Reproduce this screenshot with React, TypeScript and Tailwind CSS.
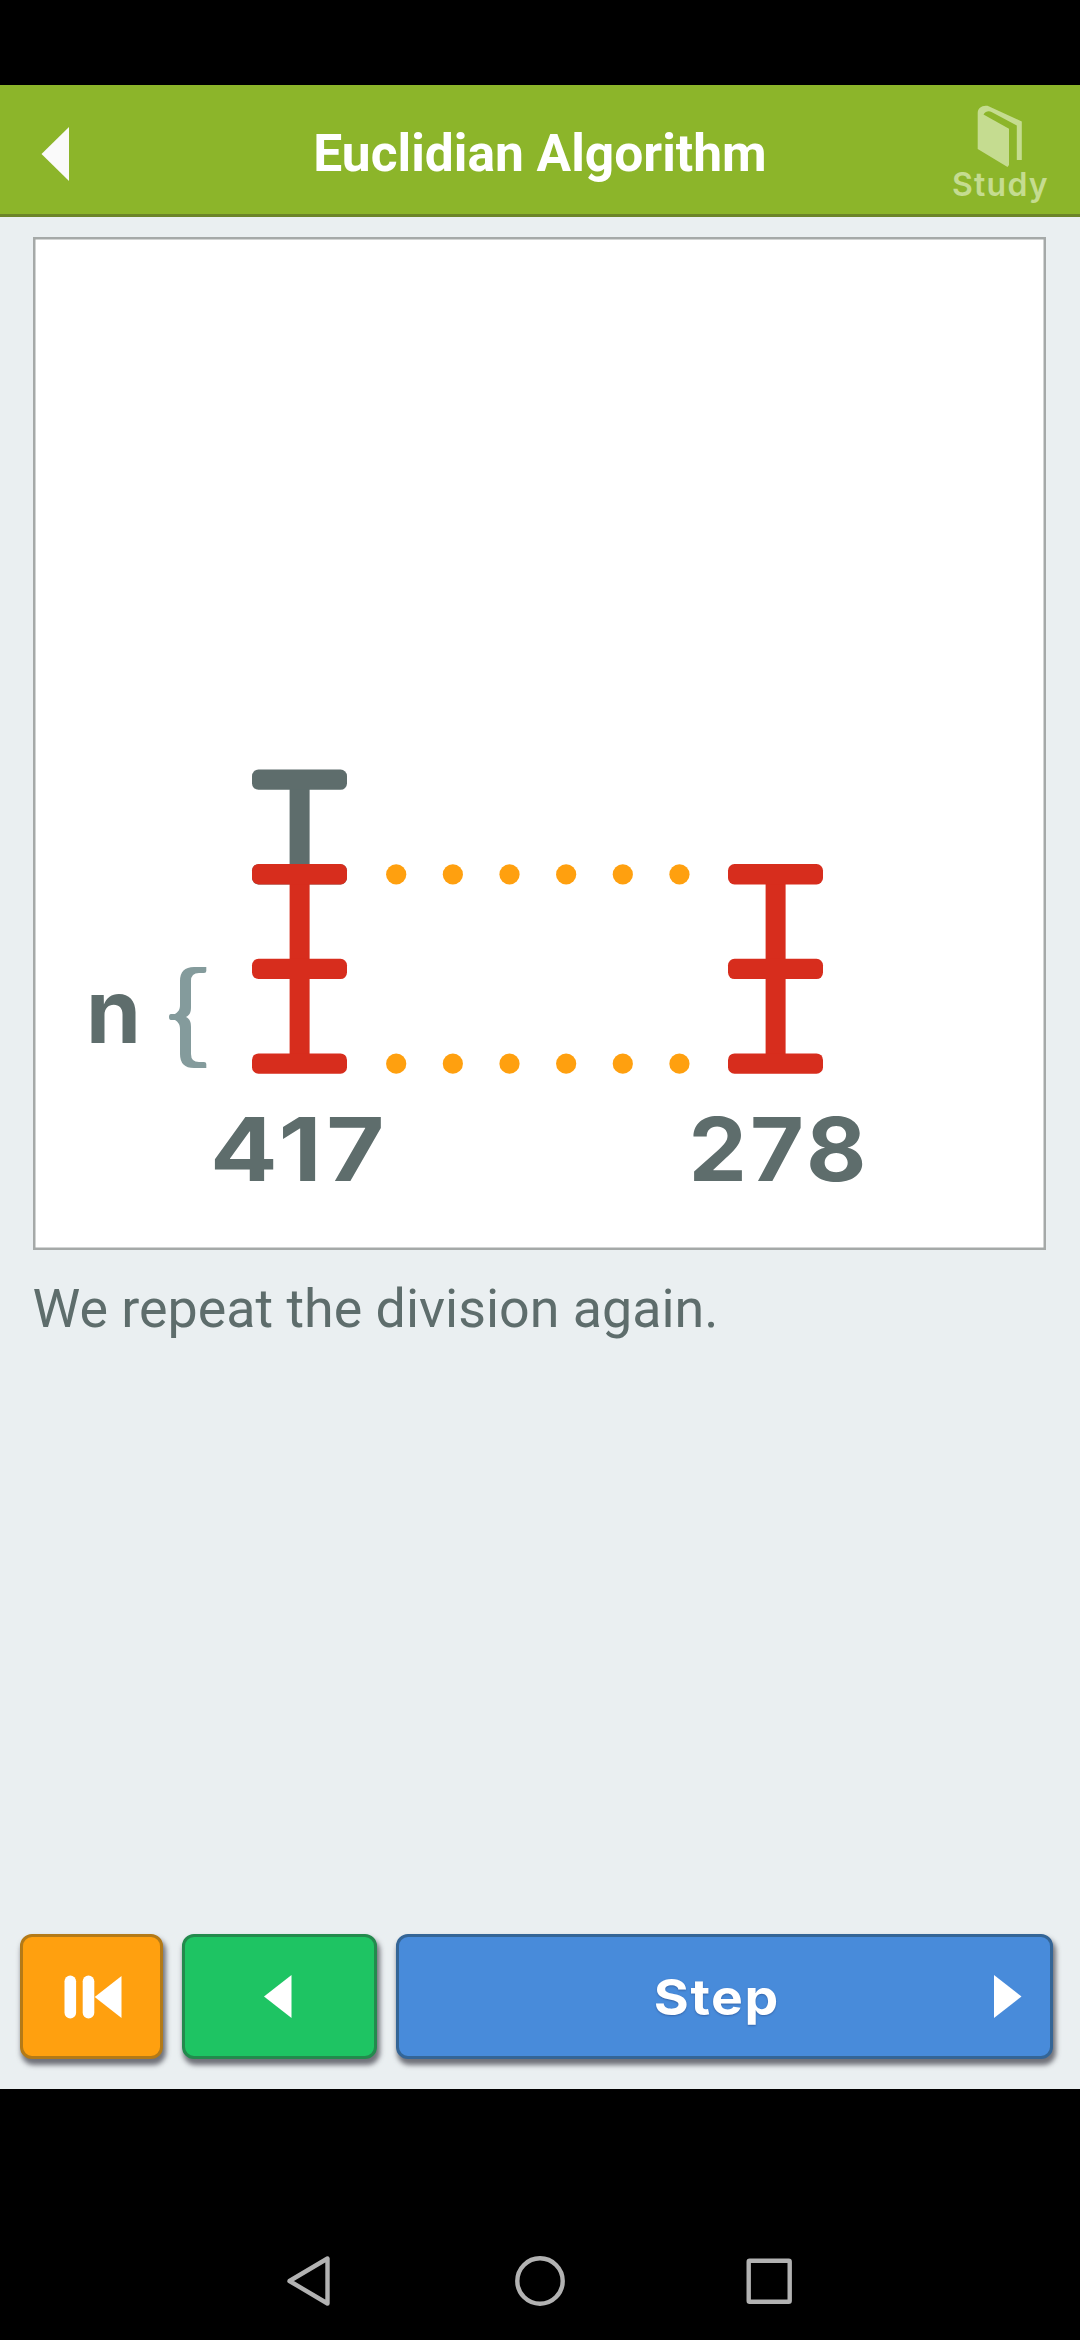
const STEP = 94.65;

function Ladder({ x, top, rungs, color }: { x: number; top: number; rungs: number; color: string }) {
  return (
    <g fill={color}>
      <rect x={x + 37.6} y={top + 8} width={20} height={(rungs - 1) * STEP + 4} />
      {Array.from({ length: rungs }, (_, i) => (
        <rect key={i} x={x} y={top + i * STEP} width={95} height={20.3} rx={6.5} />
      ))}
    </g>
  );
}

function Dots({ y }: { y: number }) {
  return (
    <g fill="#ffa00f">
      {Array.from({ length: 6 }, (_, i) => (
        <circle key={i} cx={363.2 + i * 56.65} cy={y} r={10.1} />
      ))}
    </g>
  );
}

function Diagram() {
  return (
    <svg
      className="block h-[1013px] w-[1013px] font-['Inter',sans-serif] font-bold"
      viewBox="0 0 1013 1013"
    >
      <rect x="1.25" y="1.25" width="1010.5" height="1010.5" fill="#fff" stroke="#a5a9a8" strokeWidth="2.5" />
      <Ladder x={219} top={532.5} rungs={2} color="#5e6d6c" />
      <Ladder x={219} top={627.1} rungs={3} color="#d72d1d" />
      <Ladder x={695} top={627.1} rungs={3} color="#d72d1d" />
      <Dots y={637.4} />
      <Dots y={826.7} />
      <g fill="#5e6d6c" fontSize="88">
        <text x="53" y="805.5" textLength="55" lengthAdjust="spacingAndGlyphs">n</text>
        <text x="177" y="943.5" textLength="179" letterSpacing="4" lengthAdjust="spacingAndGlyphs">417</text>
        <text x="655.5" y="943.5" textLength="181" letterSpacing="3" lengthAdjust="spacingAndGlyphs">278</text>
      </g>
      <path
        d="M173.3 730H161Q147 730 147 744V768C147 773 145 775 142 777H138Q136 777 136 780Q136 783 138 783H142C145 785 147 787 147 792V817Q147 831 161 831H173.3V827Q173.3 825 171 825H166Q158 825 158 817V790C158 785 157 782 153 780C157 778 158 775 158 770V744Q158 736 166 736H171Q173.3 736 173.3 734Z"
        fill="#849b9c"
      />
    </svg>
  );
}

const buttonBase =
  "flex h-[125px] items-center rounded-[12px] border-[3px] shadow-[2px_5px_5px_1px_rgba(60,60,70,0.7)]";

export default function App() {
  return (
    <div className="flex h-[2340px] w-[1080px] flex-col bg-black">
      <div className="h-[85px] shrink-0" />
      <header className="flex h-[132px] shrink-0 items-center justify-between border-b-[3px] border-[#6c8429] bg-[#8cb52a]">
        <button className="flex w-[150px] pt-[8px] pl-[41px]">
          <svg className="h-[54px] w-[28px]" viewBox="0 0 28 54">
            <path d="M0.5 27L28 0V54Z" fill="#fafafa" />
          </svg>
        </button>
        <h1 className="pt-[8px] font-['Roboto',sans-serif] text-[51.5px] leading-[60px] font-bold whitespace-nowrap text-white">
          Euclidian Algorithm
        </h1>
        <button className="flex w-[150px] flex-col items-center pt-[7px] pr-[9px]">
          <svg className="block h-[63px] w-[46px]" viewBox="0 0 46 63">
            <path
              d="M0.7 8C0.7 3 5 0 10.5 0.8L44.8 16.5V55H39.8V20.5L14.5 7C11.5 5.5 8.5 6.5 6.5 9.5L32 23.7V60L30.5 62L0.7 44Z"
              fill="#c5dc90"
            />
          </svg>
          <span className="font-['Inter',sans-serif] text-[32px] leading-[34px] font-semibold tracking-[1.2px] text-[#c5dc90]">
            Study
          </span>
        </button>
      </header>
      <main className="flex h-[1872px] shrink-0 flex-col bg-[#eaeff1]">
        <div className="pt-[20px] pl-[33px]">
          <Diagram />
        </div>
        <p className="mt-[27px] ml-[32.5px] font-['Roboto',sans-serif] text-[53.8px] leading-[64px] whitespace-nowrap text-[#5e6d6c]">
          We repeat the division again.
        </p>
        <div className="mt-auto mb-[30px] flex pl-[20px]">
          <button className={`${buttonBase} w-[143px] justify-center border-[#b47a17] bg-[#ffa00f] pl-[3px]`}>
            <svg className="h-[44px] w-[58px]" viewBox="0 0 58 44">
              <rect x="0.5" y="0.5" width="11.6" height="43" rx="5.8" fill="#fff" />
              <rect x="18.7" y="0.5" width="11.6" height="43" rx="5.8" fill="#fff" />
              <path d="M30.7 22L57.5 1V43Z" fill="#fff" />
            </svg>
          </button>
          <button className={`${buttonBase} ml-[19px] w-[195px] justify-center border-[#238a4d] bg-[#1ec463] pr-[4px]`}>
            <svg className="h-[43px] w-[28px]" viewBox="0 0 28 43">
              <path d="M0 21.5L27.5 0V43Z" fill="#fff" />
            </svg>
          </button>
          <button className={`${buttonBase} ml-[19px] w-[657px] border-[#346596] bg-[#488bda] pr-[28px]`}>
            <span className="flex-1 scale-x-[1.07] pt-[1px] pl-[38px] text-center font-['Inter',sans-serif] text-[50px] leading-[60px] font-bold tracking-[1.5px] text-white [text-shadow:0_1px_2px_#3464a8]">
              Step
            </span>
            <svg className="h-[43px] w-[28px]" viewBox="0 0 28 43">
              <path d="M0 0L27.5 21.5L0 43Z" fill="#fff" />
            </svg>
          </button>
        </div>
      </main>
      <nav className="flex flex-1 items-end px-[282px] pb-[31px]">
        <svg className="h-[56px] w-[516px]" viewBox="282 2253 516 56" fill="none" stroke="#b2b2b2" strokeWidth="4.4" strokeLinejoin="round">
          <path d="M289.5 2281L327.5 2258.5V2303.5Z" />
          <circle cx="540" cy="2281" r="22.7" />
          <rect x="748.7" y="2260.7" width="41" height="41" rx="1" />
        </svg>
      </nav>
    </div>
  );
}
